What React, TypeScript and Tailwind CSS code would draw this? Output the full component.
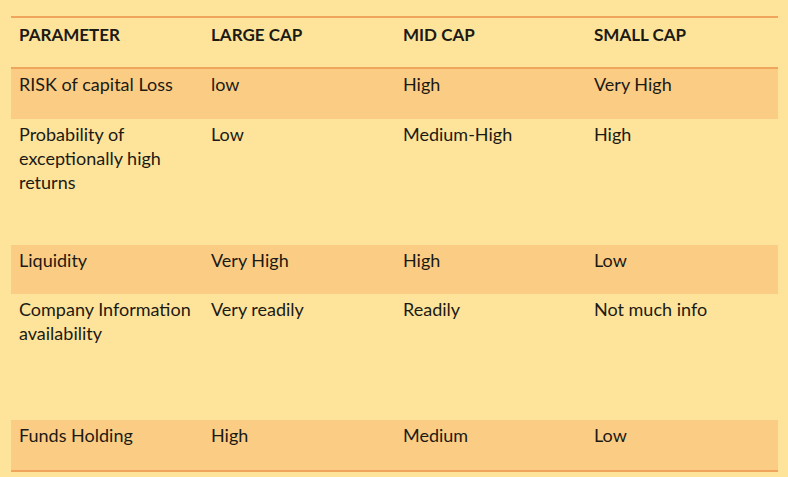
const HEADERS = ["PARAMETER", "LARGE CAP", "MID CAP", "SMALL CAP"];

const ROWS: { cells: string[]; shaded: boolean; height: string }[] = [
  { cells: ["RISK of capital Loss", "low", "High", "Very High"], shaded: true, height: "h-[50px]" },
  {
    cells: ["Probability of exceptionally high returns", "Low", "Medium-High", "High"],
    shaded: false,
    height: "h-[126px]",
  },
  { cells: ["Liquidity", "Very High", "High", "Low"], shaded: true, height: "h-[49px]" },
  {
    cells: ["Company Information availability", "Very readily", "Readily", "Not much info"],
    shaded: false,
    height: "h-[126px]",
  },
  { cells: ["Funds Holding", "High", "Medium", "Low"], shaded: true, height: "h-[50px]" },
];

export default function App() {
  return (
    <div
      className="w-[788px] h-[477px] bg-[#fee49a] pt-[16px] pl-[11px] text-[#1c1a14]"
      style={{ fontFamily: "Lato, 'Open Sans', sans-serif" }}
    >
      <div className="w-[767px] border-t-2 border-b-2 border-[#efa55c]">
        <div className="grid grid-cols-[192px_192px_191px_192px] h-[51px] border-b-2 border-[#efa55c]">
          {HEADERS.map((h) => (
            <div key={h} className="px-2 pt-[5px] text-[17px] leading-6 font-bold">
              {h}
            </div>
          ))}
        </div>
        {ROWS.map((row, i) => (
          <div
            key={i}
            className={`grid grid-cols-[192px_192px_191px_192px] ${row.height} ${
              row.shaded ? "bg-[#fbcd84]" : ""
            }`}
          >
            {row.cells.map((c, j) => (
              <div key={j} className="px-2 pt-[3px] text-[18px] leading-6">
                {c}
              </div>
            ))}
          </div>
        ))}
      </div>
    </div>
  );
}
